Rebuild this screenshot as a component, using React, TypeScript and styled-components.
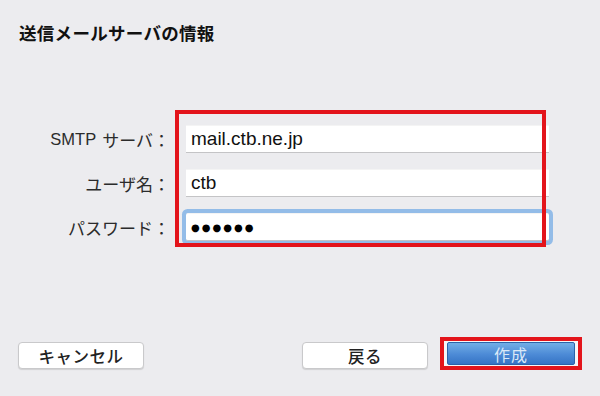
import React from "react";
import styled, { createGlobalStyle } from "styled-components";

const GlobalStyle = createGlobalStyle`
  html, body { margin: 0; padding: 0; background: #ececef; }
  body { font-family: "Liberation Sans", "Noto Sans CJK JP", sans-serif; }
`;

const Window = styled.div`
  width: 600px;
  height: 396px;
  box-sizing: border-box;
  background: #ececef;
  padding-top: 23px;
  display: flex;
  flex-direction: column;
  overflow: hidden;
`;

const Title = styled.h1`
  margin: 0 0 0 19px;
  font-family: "Noto Sans CJK JP", sans-serif;
  font-size: 17.5px;
  line-height: 20px;
  font-weight: 700;
  color: #111;
  letter-spacing: 0.3px;
`;

const FormArea = styled.div`
  position: relative;
  margin-top: 82px;
`;

const FormGrid = styled.div`
  display: grid;
  grid-template-columns: 170px 363px;
  grid-auto-rows: 28px;
  column-gap: 16px;
  row-gap: 16px;
`;

const Label = styled.div`
  font-family: "Noto Sans CJK JP", sans-serif;
  font-size: 17px;
  color: #2b2b2b;
  text-align: right;
  display: flex;
  align-items: center;
  justify-content: flex-end;
  white-space: nowrap;
`;

const Latin = styled.span`
  font-family: "Liberation Sans", sans-serif;
  font-size: 16.5px;
  margin-right: 6px;
`;

const Field = styled.div<{ $focused?: boolean }>`
  background: #fff;
  border-bottom: 1px solid #c4c4c6;
  border-top: 1px solid #f4f4f4;
  box-sizing: border-box;
  display: flex;
  align-items: center;
  padding-left: 5px;
  font-family: "Liberation Sans", sans-serif;
  font-size: 19px;
  color: #111;
  box-shadow: ${(p) => (p.$focused ? "0 0 0 4px #93bce8" : "none")};
  border-radius: ${(p) => (p.$focused ? "2px" : "0")};
`;

const Dots = styled.span`
  font-family: "DejaVu Sans", sans-serif;
  font-size: 10px;
  letter-spacing: 2px;
  color: #000;
`;

const Highlight = styled.div`
  position: absolute;
  left: 175px;
  top: -15px;
  width: 371px;
  height: 137px;
  box-sizing: border-box;
  border: 4px solid #e3141b;
  pointer-events: none;
`;

const Footer = styled.div`
  margin-top: 96px;
  padding: 0 18px;
  display: flex;
  justify-content: space-between;
  align-items: flex-start;
`;

const RightGroup = styled.div`
  display: flex;
  align-items: flex-start;
  gap: 12px;
`;

const Button = styled.button`
  margin-top: 5px;
  width: 126px;
  height: 27px;
  box-sizing: border-box;
  background: #fff;
  border: 1px solid #c9c9cb;
  border-radius: 4px;
  box-shadow: 0 1px 1px rgba(0, 0, 0, 0.12);
  font-family: "Noto Sans CJK JP", sans-serif;
  font-size: 16.5px;
  font-weight: 500;
  color: #222;
  padding: 0;
  letter-spacing: 0.5px;
  display: flex;
  align-items: center;
  justify-content: center;
`;

const RedFrame = styled.div`
  border: 4px solid #e3141b;
  padding: 1px 3px;
  background: #f6f6f8;
  display: flex;
`;

const PrimaryButton = styled.button`
  width: 128px;
  height: 23px;
  box-sizing: border-box;
  border: 1px solid #2c62a8;
  border-radius: 2px;
  background: linear-gradient(#72aee6, #4c8ad6 55%, #3674c4);
  font-family: "Noto Sans CJK JP", sans-serif;
  font-size: 16px;
  color: #dbe9f7;
  padding: 0;
  letter-spacing: 1px;
  display: flex;
  align-items: center;
  justify-content: center;
`;

export default function App() {
  return (
    <>
      <GlobalStyle />
      <Window>
        <Title>送信メールサーバの情報</Title>
        <FormArea>
          <FormGrid>
            <Label>
              <Latin>SMTP</Latin>サーバ：
            </Label>
            <Field>mail.ctb.ne.jp</Field>
            <Label>ユーザ名：</Label>
            <Field>ctb</Field>
            <Label>パスワード：</Label>
            <Field $focused>
              <Dots>●●●●●●</Dots>
            </Field>
          </FormGrid>
          <Highlight />
        </FormArea>
        <Footer>
          <Button>キャンセル</Button>
          <RightGroup>
            <Button>戻る</Button>
            <RedFrame>
              <PrimaryButton>作成</PrimaryButton>
            </RedFrame>
          </RightGroup>
        </Footer>
      </Window>
    </>
  );
}
